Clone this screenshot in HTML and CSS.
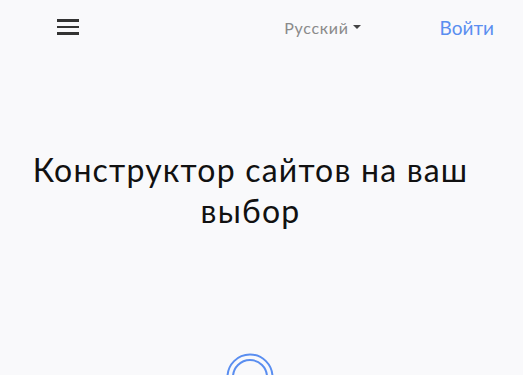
FILE: index.html
```html
<!DOCTYPE html>
<html lang="ru">
<head>
    <meta charset="utf-8">
    <title>Конструктор сайтов</title>
    <link rel="stylesheet" href="styles.css">
</head>
<body>
    <header class="topbar">
        <button class="burger" aria-label="Меню">
            <span></span><span></span><span></span>
        </button>
        <div class="lang">Русский <span class="caret"></span></div>
        <a class="login" href="#">Войти</a>
    </header>

    <section class="hero">
        <h1>Конструктор сайтов на ваш выбор</h1>
    </section>

    <div class="loader">
        <svg width="48" height="48" viewBox="0 0 48 48">
            <circle cx="24" cy="24" r="22.5" fill="none" stroke="#5a8ef0" stroke-width="2"/>
            <circle cx="24" cy="24" r="17" fill="none" stroke="#5a8ef0" stroke-width="2"/>
        </svg>
    </div>
</body>
</html>
```

FILE: styles.css
```css
html, body {
    margin: 0;
    background-color: #f9f9fb;
    font-family: Lato, "Open Sans", sans-serif;
    overflow: hidden;
    height: 375px;
}
.topbar {
    display: flex;
    align-items: center;
    height: 54px;
    padding: 0 29px 0 57px;
}
.burger {
    display: flex;
    flex-direction: column;
    gap: 4px;
    padding: 0;
    border: none;
    background: none;
    width: 22px;
    cursor: pointer;
}
.burger span {
    display: block;
    height: 2.5px;
    background-color: #333;
}
.lang {
    margin-left: auto;
    color: #8a8a8a;
    font-size: 16px;
    letter-spacing: 0.7px;
    display: flex;
    align-items: center;
    gap: 4px;
}
.caret {
    width: 0;
    height: 0;
    border-left: 4px solid transparent;
    border-right: 4px solid transparent;
    border-top: 4px solid #444;
}
.login {
    margin-left: 79px;
    color: #5a8ef0;
    font-size: 19px;
    text-decoration: none;
}
.hero {
    padding: 95px 40px 0 18px;
    text-align: center;
}
.hero h1 {
    margin: 0;
    font-size: 32px;
    font-weight: 400;
    letter-spacing: 1.2px;
    line-height: 41px;
    color: #111;
}
.loader {
    display: flex;
    justify-content: center;
    padding: 122px 23px 0 0;
}
```
